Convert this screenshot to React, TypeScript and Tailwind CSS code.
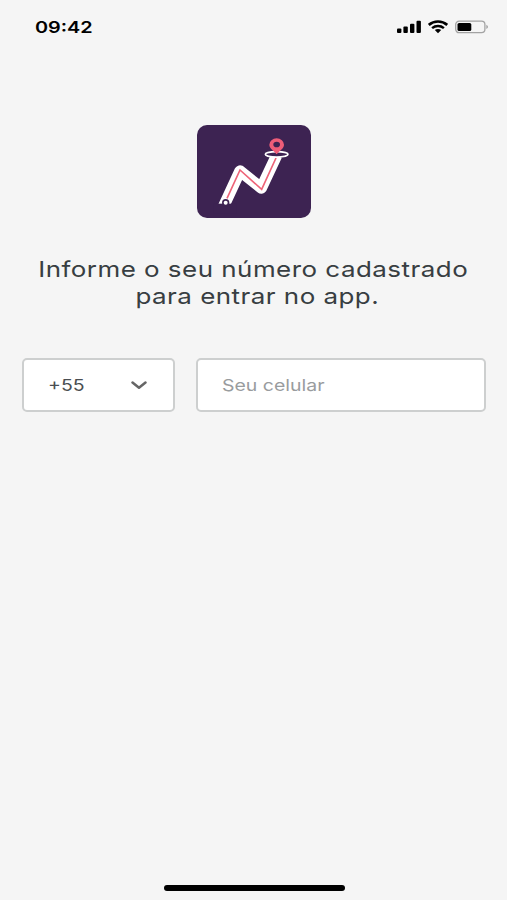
import React, { useState } from 'react';

function StatusBar() {
  return (
    <header className="flex h-[54px] items-center justify-between pr-[18px] pl-[35px]">
      <span className="origin-left scale-x-[1.24] text-[16px] leading-none font-semibold text-black">09:42</span>
      <div className="flex items-center">
        <svg width="24" height="14" viewBox="0 0 24 14" fill="black">
          <rect x="0" y="8.6" width="4.4" height="4.4" rx="1" />
          <rect x="6.4" y="6.4" width="4.4" height="6.6" rx="1" />
          <rect x="13" y="3.8" width="4.4" height="9.2" rx="1" />
          <rect x="19.5" y="0.8" width="4.4" height="12.2" rx="1" />
        </svg>
        <svg className="ml-[7px]" width="20" height="14" viewBox="0 0 20 14" fill="none" stroke="black">
          <path d="M0.8 4.9C6 .4 14 .4 19.2 4.9" strokeWidth="2.6" />
          <path d="M4.1 8.1C7.5 5.2 12.5 5.2 15.9 8.1" strokeWidth="2.5" />
          <path d="M6.8 10.1c1.9-1.6 4.5-1.6 6.4 0L10 13.2z" fill="black" stroke="none" />
        </svg>
        <svg className="ml-[7px]" width="34" height="14" viewBox="0 0 34 14" fill="none">
          <rect x="0.7" y="1.1" width="29.2" height="11.6" rx="3.4" stroke="#a3a3a3" strokeWidth="1.3" />
          <rect x="2.5" y="2.9" width="13.8" height="8.2" rx="1.6" fill="black" />
          <path d="M31.3 4.8v4.2c2.2-.8 2.2-3.4 0-4.2z" fill="#a3a3a3" />
        </svg>
      </div>
    </header>
  );
}

function Logo() {
  return (
    <svg className="mt-[71px] h-[93px] w-[114px]" viewBox="21 21 342 279" fill="none">
      <rect x="21" y="21" width="342" height="279" rx="30" fill="#3d2352" />
      <path d="M98 271L150 159L214 210L260 112" stroke="white" strokeWidth="34" strokeLinejoin="round" />
      <path d="M111 241L150 156L215 214L258 120" stroke="#ee6478" strokeWidth="5" />
      <ellipse cx="260" cy="109" rx="34" ry="8" fill="#3d2352" stroke="white" strokeWidth="5" />
      <path
        fillRule="evenodd"
        d="M260 109C253 98 238 93 238 80a22 19 0 0 1 44 0c0 13-15 18-22 29zM260 71a10 8.5 0 1 0 0 17a10 8.5 0 0 0 0-17z"
        fill="#ee5d78"
      />
      <rect x="70" y="257" width="70" height="30" fill="#3d2352" />
      <circle cx="107" cy="254" r="11" fill="#3d2352" />
      <circle cx="107" cy="254" r="6" fill="white" />
    </svg>
  );
}

export default function App() {
  const [phone, setPhone] = useState('');

  return (
    <main className="flex h-[900px] w-full flex-col overflow-hidden bg-[#f5f5f5] font-[Inter,sans-serif]">
      <StatusBar />

      <section className="flex flex-col items-center">
        <Logo />
        <h1 className="mt-[38px] flex flex-col items-center text-[22px] leading-[27px] whitespace-nowrap text-[#383e42]">
          <span className="scale-x-[1.18] tracking-[0.4px]">Informe o seu número cadastrado</span>
          <span className="ml-[7px] scale-x-[1.18] tracking-[0.4px]">para entrar no app.</span>
        </h1>
      </section>

      <form className="mt-[48px] flex gap-[21px] pr-[21px] pl-[22px]">
        <button
          type="button"
          className="flex h-[54px] w-[153px] shrink-0 items-center justify-between rounded-[5px] border-2 border-[#cdcfcf] bg-white pr-[26px] pl-[24px]"
        >
          <span className="origin-left scale-x-[1.18] text-[16.5px] text-[#4a4e52]">+55</span>
          <svg width="16" height="9" viewBox="0 0 16 9" fill="none" stroke="#666" strokeWidth="2.5">
            <path d="M1.5 1.5L8 6.8l6.5-5.3" strokeLinecap="round" strokeLinejoin="round" />
          </svg>
        </button>
        <div className="flex h-[54px] flex-1 items-center rounded-[5px] border-2 border-[#cdcfcf] bg-white pl-[24px]">
          <input
            type="tel"
            value={phone}
            onChange={(e) => setPhone(e.target.value)}
            placeholder="Seu celular"
            className="w-[200px] origin-left scale-x-[1.18] bg-transparent text-[16.5px] text-[#4a4e52] outline-none placeholder:text-[#999c9e]"
          />
        </div>
      </form>

      <div className="mx-auto mt-auto mb-[9px] h-[6px] w-[181px] translate-x-px rounded-full bg-black" />
    </main>
  );
}
